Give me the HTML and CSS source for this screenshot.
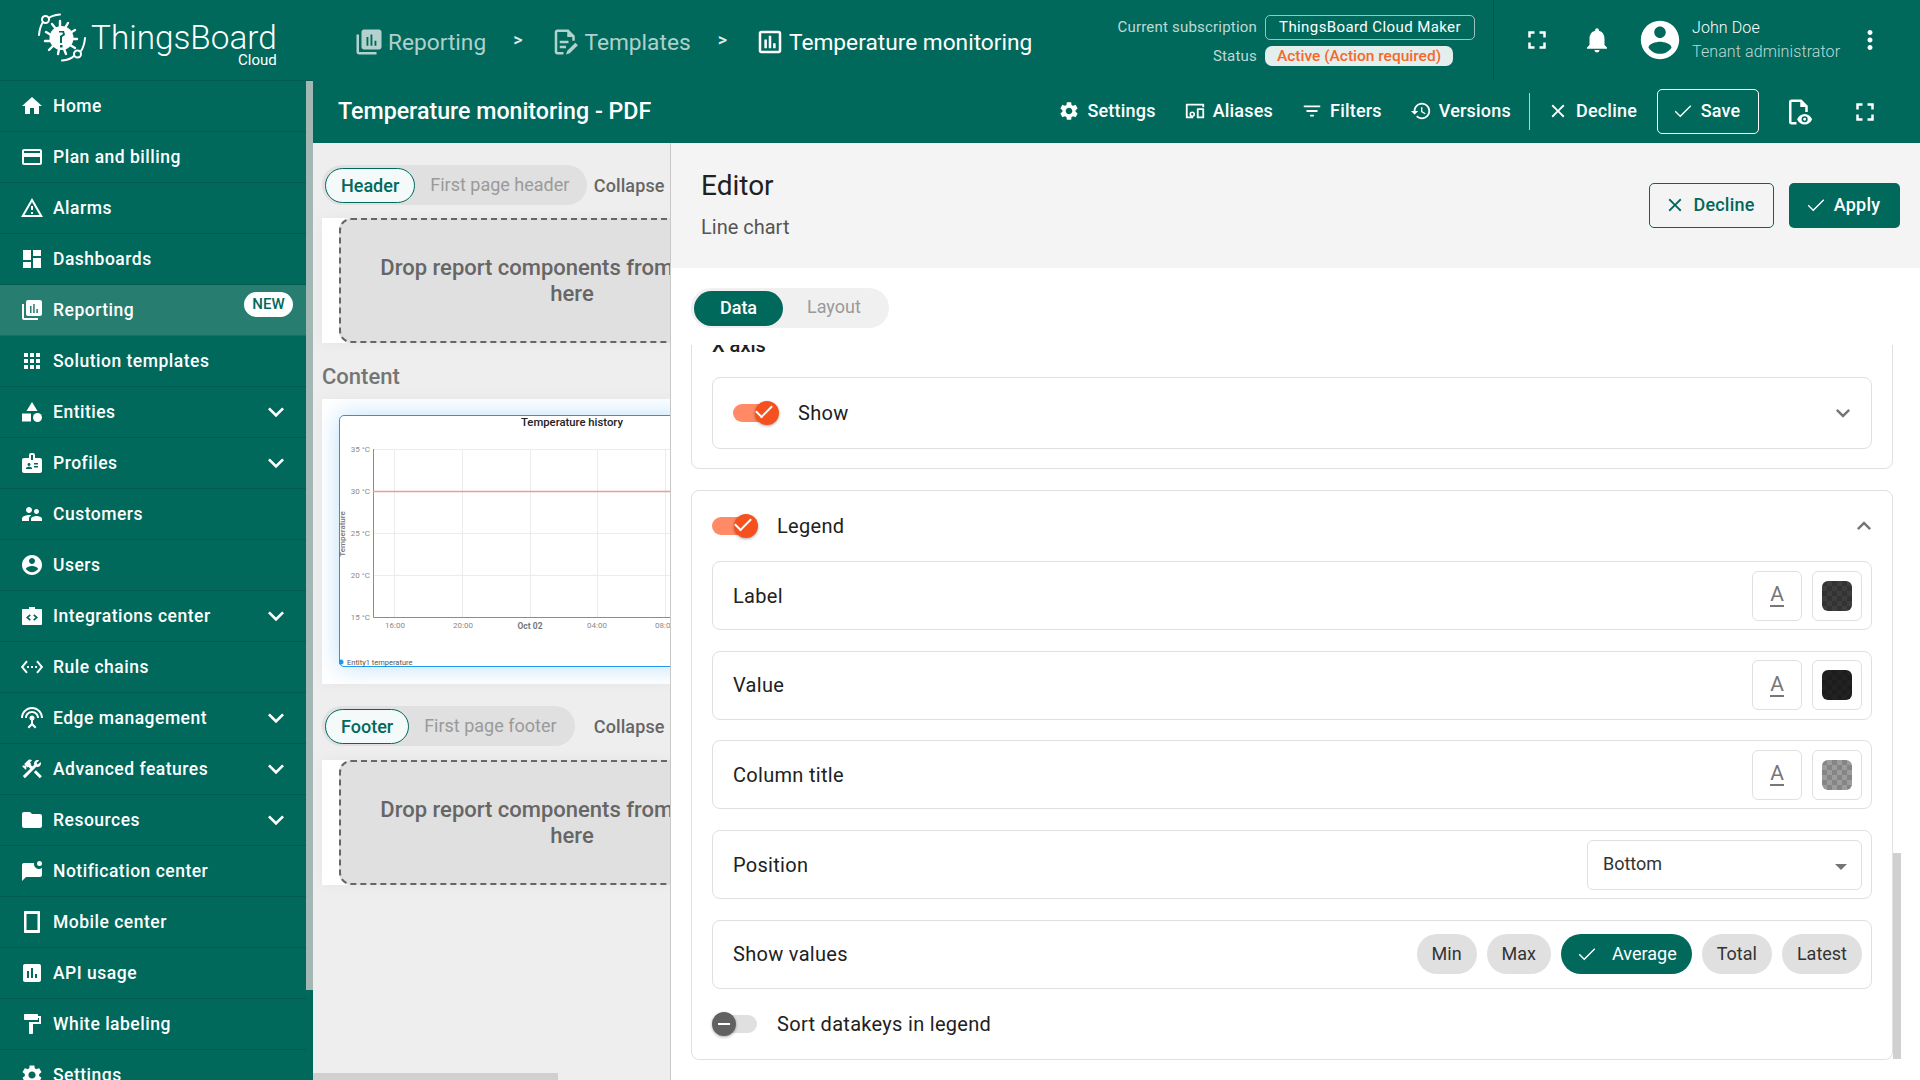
FILE: index.html
```html
<!DOCTYPE html>
<html>
  <head>
    <meta charset="utf-8" />
    <title>ThingsBoard - Temperature monitoring</title>
    <link rel="stylesheet" href="styles.css">
  </head>
  <body>
    <svg class="sprite" aria-hidden="true">
      <symbol id="i-home" viewBox="0 0 24 24"><path d="M10 20v-6h4v6h5v-8h3L12 3 2 12h3v8z"/></symbol>
      <symbol id="i-card" viewBox="0 0 24 24"><path d="M20 4H4c-1.11 0-1.99.89-1.99 2L2 18c0 1.11.89 2 2 2h16c1.11 0 2-.89 2-2V6c0-1.11-.89-2-2-2zm0 14H4v-6h16v6zm0-10H4V6h16v2z"/></symbol>
      <symbol id="i-warn" viewBox="0 0 24 24"><path d="M12 5.99L19.53 19H4.47L12 5.99M12 2L1 21h22L12 2zm1 14h-2v2h2v-2zm0-6h-2v4h2v-4z"/></symbol>
      <symbol id="i-dash" viewBox="0 0 24 24"><path d="M3 13h8V3H3v10zm0 8h8v-6H3v6zm10 0h8V11h-8v10zm0-18v6h8V3h-8z"/></symbol>
      <symbol id="i-report" viewBox="0 0 24 24"><path fill-rule="evenodd" d="M4 6H2v14c0 1.1.9 2 2 2h14v-2H4V6zm16-4H8c-1.1 0-2 .9-2 2v12c0 1.1.9 2 2 2h12c1.1 0 2-.9 2-2V4c0-1.1-.9-2-2-2zM10 8h1.5v7H10zM13.2 6h1.5v9h-1.5zM16.4 11h1.5v4h-1.5z"/></symbol>
      <symbol id="i-apps" viewBox="0 0 24 24"><path d="M4 8h4V4H4v4zm6 12h4v-4h-4v4zm-6 0h4v-4H4v4zm0-6h4v-4H4v4zm6 0h4v-4h-4v4zm6-10v4h4V4h-4zm-6 4h4V4h-4v4zm6 6h4v-4h-4v4zm0 6h4v-4h-4v4z"/></symbol>
      <symbol id="i-entities" viewBox="0 0 24 24"><path d="M12 2l-5.5 9h11z"/><circle cx="17.5" cy="17.5" r="4.5"/><path d="M2 13.5h9v8H2z"/></symbol>
      <symbol id="i-badge" viewBox="0 0 24 24"><path d="M20 7h-5V4c0-1.1-.9-2-2-2h-2c-1.1 0-2 .9-2 2v3H4c-1.1 0-2 .9-2 2v11c0 1.1.9 2 2 2h16c1.1 0 2-.9 2-2V9c0-1.1-.9-2-2-2zM9 12c.83 0 1.5.67 1.5 1.5S9.83 15 9 15s-1.5-.67-1.5-1.5S8.17 12 9 12zm3 6H6v-.75c0-1 2-1.5 3-1.5s3 .5 3 1.5V18zm1-9h-2V4h2v5zm5 7.5h-4V15h4v1.5zm0-3h-4V12h4v1.5z"/></symbol>
      <symbol id="i-people" viewBox="0 0 24 24"><path d="M16.5 12c1.38 0 2.49-1.12 2.49-2.5S17.88 7 16.5 7C15.12 7 14 8.12 14 9.5s1.12 2.5 2.5 2.5zM9 11c1.66 0 2.99-1.34 2.99-3S10.66 5 9 5C7.34 5 6 6.34 6 8s1.34 3 3 3zm7.5 3c-1.83 0-5.5.92-5.5 2.75V19h11v-2.25c0-1.83-3.67-2.75-5.5-2.75zM9 13c-2.33 0-7 1.17-7 3.5V19h7v-2.25c0-.85.33-2.34 2.37-3.47C10.5 13.1 9.66 13 9 13z"/></symbol>
      <symbol id="i-account" viewBox="0 0 24 24"><path d="M12 2C6.48 2 2 6.48 2 12s4.48 10 10 10 10-4.48 10-10S17.52 2 12 2zm0 3c1.66 0 3 1.34 3 3s-1.34 3-3 3-3-1.34-3-3 1.34-3 3-3zm0 14.2c-2.5 0-4.71-1.28-6-3.22.03-1.99 4-3.08 6-3.08 1.99 0 5.97 1.09 6 3.08-1.29 1.94-3.5 3.22-6 3.22z"/></symbol>
      <symbol id="i-integration" viewBox="0 0 24 24"><path fill-rule="evenodd" d="M9 3h6v2h6c.55 0 1 .45 1 1v14c0 .55-.45 1-1 1H3c-.55 0-1-.45-1-1V6c0-.55.45-1 1-1h6V3zm.7 7.3L6 13.5l3.7 3.2 1.1-1.2-2.3-2 2.3-2-1.100-1.200zm4.600 0l-1.100 1.200 2.300 2-2.300 2 1.100 1.200 3.700-3.200-3.700-3.200z"/></symbol>
      <symbol id="i-rule" viewBox="0 0 24 24"><path d="M7.770 6.760L6.230 5.480.82 12l5.410 6.520 1.540-1.280L3.420 12l4.350-5.240zM7 13h2v-2H7v2zm10-2h-2v2h2v-2zm-6 2h2v-2h-2v2zm6.770-7.520l-1.540 1.280L20.580 12l-4.350 5.240 1.540 1.280L23.180 12l-5.410-6.520z"/></symbol>
      <symbol id="i-edge" viewBox="0 0 24 24"><path d="M12 5c-3.870 0-7 3.130-7 7h2c0-2.760 2.240-5 5-5s5 2.240 5 5h2c0-3.870-3.130-7-7-7zm1 9.290c.88-.39 1.500-1.260 1.500-2.290 0-1.380-1.120-2.500-2.500-2.500S9.500 10.620 9.500 12c0 1.020.62 1.900 1.500 2.290v3.300L7.590 21 9 22.410l3-3 3 3L16.410 21 13 17.590v-3.300zM12 1C5.930 1 1 5.930 1 12h2c0-4.970 4.030-9 9-9s9 4.030 9 9h2c0-6.070-4.930-11-11-11z"/></symbol>
      <symbol id="i-tools" viewBox="0 0 24 24"><path d="M13.780 15.300l6 6 2.110-2.160-6-6zM17.500 10c1.930 0 3.500-1.570 3.500-3.500 0-.58-.16-1.120-.41-1.600l-2.700 2.700-1.490-1.490 2.700-2.700c-.48-.25-1.020-.41-1.600-.41C15.570 3 14 4.570 14 6.500c0 .41.08.8.21 1.160l-1.850 1.850-1.780-1.780.71-.71-1.410-1.410L12 3.490c-1.170-1.170-3.070-1.170-4.240 0L4.220 7.030l1.410 1.410H2.810l-.71.71 3.540 3.540.71-.71V9.150l1.410 1.410.71-.71 1.780 1.780-7.410 7.410 2.120 2.120L16.340 9.790c.36.13.75.21 1.160.21z"/></symbol>
      <symbol id="i-folder" viewBox="0 0 24 24"><path d="M10 4H4c-1.100 0-1.990.9-1.990 2L2 18c0 1.100.9 2 2 2h16c1.100 0 2-.9 2-2V8c0-1.100-.9-2-2-2h-8l-2-2z"/></symbol>
      <symbol id="i-notify" viewBox="0 0 24 24"><path d="M2 22V6c0-1.100.9-2 2-2h10.100c-.07.32-.1.66-.1 1 0 2.760 2.240 5 5 5 1 0 2-.3 3-.9V16c0 1.100-.9 2-2 2H6l-4 4z"/><circle cx="19.500" cy="4.500" r="2.500"/></symbol>
      <symbol id="i-mobile" viewBox="0 0 24 24"><path fill-rule="evenodd" d="M5 1h14c.55 0 1 .45 1 1v20c0 .55-.45 1-1 1H5c-.55 0-1-.45-1-1V2c0-.55.45-1 1-1zm1.500 3v16h11V4z"/></symbol>
      <symbol id="i-chart" viewBox="0 0 24 24"><path d="M19 3H5c-1.100 0-2 .9-2 2v14c0 1.100.9 2 2 2h14c1.100 0 2-.9 2-2V5c0-1.100-.9-2-2-2zM9 17H7v-7h2v7zm4 0h-2V7h2v10zm4 0h-2v-4h2v4z"/></symbol>
      <symbol id="i-chart-o" viewBox="0 0 24 24"><path d="M19 3H5c-1.100 0-2 .9-2 2v14c0 1.100.9 2 2 2h14c1.100 0 2-.9 2-2V5c0-1.100-.9-2-2-2zm0 16H5V5h14v14zM7.500 10h2v7h-2zM11 7h2v10h-2zM14.500 13h2v4h-2z"/></symbol>
      <symbol id="i-paint" viewBox="0 0 24 24"><path d="M18 4V3c0-.55-.45-1-1-1H5c-.55 0-1 .45-1 1v4c0 .55.45 1 1 1h12c.55 0 1-.45 1-1V6h1v4H9v11c0 .55.45 1 1 1h2c.55 0 1-.45 1-1v-9h8V4h-3z"/></symbol>
      <symbol id="i-gear" viewBox="0 0 24 24"><path d="M19.140 12.940c.04-.3.06-.61.06-.94 0-.32-.02-.64-.07-.94l2.030-1.580c.18-.14.23-.41.12-.61l-1.920-3.320c-.12-.22-.37-.29-.59-.22l-2.390.96c-.5-.38-1.030-.7-1.620-.94l-.36-2.540c-.04-.24-.24-.41-.48-.41h-3.840c-.24 0-.43.17-.47.41l-.36 2.540c-.59.24-1.130.57-1.620.94l-2.390-.96c-.22-.08-.47 0-.59.22L2.740 8.870c-.12.21-.08.47.12.61l2.030 1.580c-.05.3-.09.63-.09.94s.02.64.07.94l-2.030 1.580c-.18.14-.23.41-.12.61l1.920 3.320c.12.22.37.29.59.22l2.390-.96c.5.38 1.030.7 1.620.94l.36 2.540c.05.24.24.41.48.41h3.840c.24 0 .44-.17.47-.41l.36-2.540c.59-.24 1.130-.56 1.620-.94l2.390.96c.22.08.47 0 .59-.22l1.920-3.320c.12-.22.07-.47-.12-.61l-2.010-1.580zM12 15.600c-1.980 0-3.600-1.620-3.600-3.600s1.620-3.600 3.600-3.600 3.600 1.620 3.600 3.600-1.620 3.600-3.600 3.600z"/></symbol>
      <symbol id="i-more" viewBox="0 0 24 24"><path d="M16.590 8.590L12 13.170 7.410 8.590 6 10l6 6 6-6z"/></symbol>
      <symbol id="i-full" viewBox="0 0 24 24"><path d="M7 14H5v5h5v-2H7v-3zm-2-4h2V7h3V5H5v5zm12 7h-3v2h5v-5h-2v3zM14 5v2h3v3h2V5h-5z"/></symbol>
      <symbol id="i-bell" viewBox="0 0 24 24"><path d="M12 22c1.100 0 2-.9 2-2h-4c0 1.100.89 2 2 2zm6-6v-5c0-3.070-1.640-5.640-4.500-6.320V4c0-.83-.67-1.500-1.500-1.500s-1.500.67-1.500 1.500v.68C7.630 5.360 6 7.920 6 11v5l-2 2v1h16v-1l-2-2z"/></symbol>
      <symbol id="i-dots" viewBox="0 0 24 24"><path d="M12 8c1.100 0 2-.9 2-2s-.9-2-2-2-2 .9-2 2 .9 2 2 2zm0 2c-1.100 0-2 .9-2 2s.9 2 2 2 2-.9 2-2-.9-2-2-2zm0 6c-1.100 0-2 .9-2 2s.9 2 2 2 2-.9 2-2-.9-2-2-2z"/></symbol>
      <symbol id="i-filter" viewBox="0 0 24 24"><path d="M10 18h4v-2h-4v2zM3 6v2h18V6H3zm3 7h12v-2H6v2z"/></symbol>
      <symbol id="i-history" viewBox="0 0 24 24"><path d="M13 3c-4.970 0-9 4.030-9 9H1l3.890 3.890.07.14L9 12H6c0-3.870 3.130-7 7-7s7 3.130 7 7-3.130 7-7 7c-1.930 0-3.680-.79-4.940-2.060l-1.420 1.420C8.270 19.990 10.510 21 13 21c4.970 0 9-4.030 9-9s-4.030-9-9-9zm-1 5v5l4.280 2.540.72-1.210-3.500-2.080V8H12z"/></symbol>
      <symbol id="i-close" viewBox="0 0 24 24"><path d="M19 6.410L17.590 5 12 10.590 6.410 5 5 6.410 10.590 12 5 17.590 6.410 19 12 13.410 17.590 19 19 17.590 13.410 12z"/></symbol>
      <symbol id="i-check" viewBox="0 0 24 24"><path d="M9 16.700L4 11.700l-1 1L9 18.700 21 6.700l-1-1z"/></symbol>
      <symbol id="i-alias" viewBox="0 0 24 24"><path d="M20 4H3c-.55 0-1 .45-1 1v14c0 .55.45 1 1 1h7v-2H4V6h16v2h2V5c0-.55-.45-1-1-1zM15 9h6c.55 0 1 .45 1 1v9c0 .55-.45 1-1 1h-6c-.55 0-1-.45-1-1v-9c0-.55.45-1 1-1zm1 2v7h4v-7zM9 12.500a3 3 0 1 0 0 6 3 3 0 0 0 0-6zm0 1.700a1.300 1.300 0 1 1 0 2.600 1.300 1.300 0 0 1 0-2.600z"/></symbol>
      <symbol id="i-template" viewBox="0 0 24 24"><path d="M5 2h9l5 5v4h-2V8h-4V4H5v16h5v2H5c-1.100 0-2-.9-2-2V4c0-1.100.9-2 2-2zM7 11h7v2H7zM7 15h5v2H7zM19.500 12.500l2 2-6.500 6.500-3 1 1-3z"/></symbol>
      <symbol id="i-preview" viewBox="0 0 24 24"><path d="M6 2h8l5 5v5h-2V8h-4V4H6v16h4v2H6c-1.100 0-2-.9-2-2V4c0-1.100.9-2 2-2z"/><path fill-rule="evenodd" d="M16.500 13.500c2.700 0 5 1.700 6 4.250-1 2.550-3.300 4.250-6 4.250s-5-1.700-6-4.250c1-2.550 3.300-4.250 6-4.250zm0 1.800a2.450 2.450 0 1 0 0 4.900 2.450 2.450 0 0 0 0-4.900zm0 1.300a1.150 1.150 0 1 1 0 2.300 1.150 1.150 0 0 1 0-2.300z"/></symbol>
    </svg>

    <header class="topbar">
      <div class="logo">
        <svg class="logo-mark" viewBox="0 0 52 52">
          <g fill="none" stroke="#fff" stroke-width="2" stroke-linecap="round">
            <path d="M3 22 C3.500 16 5 12 7 9"/>
            <circle cx="9.500" cy="6.500" r="3.500"/>
            <path d="M13 5 C15 3 19 2 24 1.500"/>
            <path d="M49 25 C48.500 31 47 35 45 38"/>
            <circle cx="41.500" cy="41" r="3.500"/>
            <path d="M38 43 C36 45 31 47 26 47.500"/>
            <g stroke-width="2.400">
              <path d="M16 11l4 5M24 8v6M32 10l-3 5M39 17l-5 3M41 26h-6M39 35l-5-3M30 41l-2-5M22 41l1-5M13 37l4-4M9 28h6M10 19l5 3"/>
            </g>
          </g>
          <circle cx="25.500" cy="25" r="12" fill="#fff"/>
          <path d="M23 18h5l1 4-3 2v6h-2v-7l3-2-.5-1.500H23zM24 32h2.500v2.500H24z" fill="#00695c"/>
        </svg>
        <div class="logo-text">
          <span class="logo-name">ThingsBoard</span>
          <span class="logo-sub">Cloud</span>
        </div>
      </div>
      <nav class="crumbs">
        <svg class="crumb-icon"><use href="#i-report"/></svg>
        <span class="crumb">Reporting</span>
        <span class="crumb-sep">&gt;</span>
        <svg class="crumb-icon"><use href="#i-template"/></svg>
        <span class="crumb">Templates</span>
        <span class="crumb-sep">&gt;</span>
        <svg class="crumb-icon current"><use href="#i-chart-o"/></svg>
        <span class="crumb current">Temperature monitoring</span>
      </nav>
      <div class="subscription">
        <span class="sub-label">Current subscription</span>
        <span class="sub-plan">ThingsBoard Cloud Maker</span>
        <span class="sub-label">Status</span>
        <span class="sub-status">Active (Action required)</span>
      </div>
      <div class="top-tools">
        <button class="icon-btn"><svg><use href="#i-full"/></svg></button>
        <button class="icon-btn"><svg><use href="#i-bell"/></svg></button>
        <svg class="avatar"><use href="#i-account"/></svg>
        <div class="user">
          <span class="user-name">John Doe</span>
          <span class="user-role">Tenant administrator</span>
        </div>
        <button class="icon-btn"><svg><use href="#i-dots"/></svg></button>
      </div>
    </header>

    <div class="shell">
      <aside class="sidenav">
        <a class="nav-item"><svg><use href="#i-home"/></svg>Home</a>
        <a class="nav-item"><svg><use href="#i-card"/></svg>Plan and billing</a>
        <a class="nav-item"><svg><use href="#i-warn"/></svg>Alarms</a>
        <a class="nav-item"><svg><use href="#i-dash"/></svg>Dashboards</a>
        <a class="nav-item active"><svg><use href="#i-report"/></svg>Reporting<span class="nav-new">NEW</span></a>
        <a class="nav-item"><svg><use href="#i-apps"/></svg>Solution templates</a>
        <a class="nav-item"><svg><use href="#i-entities"/></svg>Entities<svg class="nav-arrow"><use href="#i-more"/></svg></a>
        <a class="nav-item"><svg><use href="#i-badge"/></svg>Profiles<svg class="nav-arrow"><use href="#i-more"/></svg></a>
        <a class="nav-item"><svg><use href="#i-people"/></svg>Customers</a>
        <a class="nav-item"><svg><use href="#i-account"/></svg>Users</a>
        <a class="nav-item"><svg><use href="#i-integration"/></svg>Integrations center<svg class="nav-arrow"><use href="#i-more"/></svg></a>
        <a class="nav-item"><svg><use href="#i-rule"/></svg>Rule chains</a>
        <a class="nav-item"><svg><use href="#i-edge"/></svg>Edge management<svg class="nav-arrow"><use href="#i-more"/></svg></a>
        <a class="nav-item"><svg><use href="#i-tools"/></svg>Advanced features<svg class="nav-arrow"><use href="#i-more"/></svg></a>
        <a class="nav-item"><svg><use href="#i-folder"/></svg>Resources<svg class="nav-arrow"><use href="#i-more"/></svg></a>
        <a class="nav-item"><svg><use href="#i-notify"/></svg>Notification center</a>
        <a class="nav-item"><svg><use href="#i-mobile"/></svg>Mobile center</a>
        <a class="nav-item"><svg><use href="#i-chart"/></svg>API usage</a>
        <a class="nav-item"><svg><use href="#i-paint"/></svg>White labeling</a>
        <a class="nav-item"><svg><use href="#i-gear"/></svg>Settings</a>
        <div class="nav-scroll"></div>
      </aside>

      <main class="main">
        <div class="toolbar">
          <h1 class="page-title">Temperature monitoring - PDF</h1>
          <div class="actions">
            <a class="action"><svg><use href="#i-gear"/></svg>Settings</a>
            <a class="action"><svg><use href="#i-alias"/></svg>Aliases</a>
            <a class="action"><svg><use href="#i-filter"/></svg>Filters</a>
            <a class="action"><svg><use href="#i-history"/></svg>Versions</a>
            <span class="action-sep"></span>
            <a class="action"><svg><use href="#i-close"/></svg>Decline</a>
            <a class="action save"><svg><use href="#i-check"/></svg>Save</a>
            <svg class="tool-icon preview"><use href="#i-preview"/></svg>
            <svg class="tool-icon"><use href="#i-full"/></svg>
          </div>
        </div>

        <div class="workspace">
          <section class="report">
            <div class="section-head">
              <div class="seg">
                <span class="seg-item on">Header</span>
                <span class="seg-item">First page header</span>
              </div>
              <span class="collapse">Collapse</span>
            </div>
            <div class="band">
              <div class="drop">Drop report components from the pane<br>here</div>
            </div>

            <h2 class="content-title">Content</h2>
            <div class="band chart-band">
              <div class="chart-box">
                <svg class="chart" viewBox="0 0 464 252" width="464" height="252">
                  <text x="233" y="11" class="c-title" text-anchor="middle">Temperature history</text>
                  <g stroke="#ececec">
                    <path d="M34 34.500H464M34 118.500H464M34 160.500H464"/>
                    <path d="M55.500 34V202M123.500 34V202M191.500 34V202M258.500 34V202M326.500 34V202"/>
                  </g>
                  <path d="M34.500 34V202.500H464" fill="none" stroke="#8c8c8c"/>
                  <path d="M34 76.500H464" stroke="#ef9a9a" stroke-width="1.500"/>
                  <g class="c-tick" text-anchor="end">
                    <text x="31" y="37">35 °C</text>
                    <text x="31" y="79">30 °C</text>
                    <text x="31" y="121">25 °C</text>
                    <text x="31" y="163">20 °C</text>
                    <text x="31" y="205">15 °C</text>
                  </g>
                  <g class="c-tick" text-anchor="middle">
                    <text x="56" y="213">16:00</text>
                    <text x="124" y="213">20:00</text>
                    <text x="258" y="213">04:00</text>
                    <text x="326" y="213">08:00</text>
                    <text x="191" y="214" class="c-bold">Oct 02</text>
                  </g>
                  <text class="c-axis" transform="translate(6 119) rotate(-90)" text-anchor="middle">Temperature</text>
                  <circle cx="2" cy="247" r="2.500" fill="#2196f3"/>
                  <text x="8" y="250" class="c-legend">Entity1 temperature</text>
                </svg>
              </div>
            </div>

            <div class="section-head footer-head">
              <div class="seg">
                <span class="seg-item on">Footer</span>
                <span class="seg-item">First page footer</span>
              </div>
              <span class="collapse">Collapse</span>
            </div>
            <div class="band footer-band">
              <div class="drop">Drop report components from the pane<br>here</div>
            </div>
            <div class="h-scroll"></div>
          </section>

          <section class="editor">
            <div class="editor-head">
              <div>
                <h2 class="editor-title">Editor</h2>
                <div class="editor-sub">Line chart</div>
              </div>
              <div class="editor-btns">
                <a class="btn btn-outline"><svg><use href="#i-close"/></svg>Decline</a>
                <a class="btn btn-solid"><svg><use href="#i-check"/></svg>Apply</a>
              </div>
            </div>
            <div class="editor-tabs">
              <div class="seg seg-light">
                <span class="seg-item fill">Data</span>
                <span class="seg-item">Layout</span>
              </div>
            </div>
            <div class="editor-scroll">
              <div class="panel axis-panel">
                <div class="panel-title">X axis</div>
                <div class="row show-row">
                  <span class="toggle on"></span>
                  <span class="row-label">Show</span>
                  <svg class="row-chevron"><use href="#i-more"/></svg>
                </div>
              </div>
              <div class="panel legend-panel">
                <div class="panel-head">
                  <span class="toggle on"></span>
                  <span class="row-label">Legend</span>
                  <svg class="row-chevron up"><use href="#i-more"/></svg>
                </div>
                <div class="rows">
                  <div class="row">
                    <span class="row-label">Label</span>
                    <span class="font-btn"><span class="font-a">A</span></span>
                    <span class="color-btn"><span class="swatch sw-label"></span></span>
                  </div>
                  <div class="row">
                    <span class="row-label">Value</span>
                    <span class="font-btn"><span class="font-a">A</span></span>
                    <span class="color-btn"><span class="swatch sw-value"></span></span>
                  </div>
                  <div class="row">
                    <span class="row-label">Column title</span>
                    <span class="font-btn"><span class="font-a">A</span></span>
                    <span class="color-btn"><span class="swatch sw-title"></span></span>
                  </div>
                  <div class="row">
                    <span class="row-label">Position</span>
                    <span class="select">Bottom<i class="select-arrow"></i></span>
                  </div>
                  <div class="row">
                    <span class="row-label">Show values</span>
                    <div class="chips">
                      <span class="chip">Min</span>
                      <span class="chip">Max</span>
                      <span class="chip selected"><svg><use href="#i-check"/></svg>Average</span>
                      <span class="chip">Total</span>
                      <span class="chip">Latest</span>
                    </div>
                  </div>
                </div>
                <div class="panel-foot">
                  <span class="toggle off"></span>
                  <span class="row-label">Sort datakeys in legend</span>
                </div>
              </div>
              <div class="v-scroll"></div>
            </div>
          </section>
        </div>
      </main>
    </div>
  </body>
</html>
```

FILE: styles.css
```css
* {
  box-sizing: border-box;
}
html,
body {
  margin: 0;
  height: 1080px;
  overflow: hidden;
}
body {
  font-family: "Roboto", sans-serif;
  color: #212121;
  background: #00695c;
}
h1,
h2 {
  margin: 0;
}
svg {
  fill: currentColor;
  flex: none;
}
.sprite {
  display: none;
}

/* top bar */
.topbar {
  display: flex;
  align-items: center;
  height: 80px;
  color: #fff;
  background: #00695c;
}
.logo {
  display: flex;
  flex: none;
  width: 313px;
  padding: 13px 0 0 36px;
  height: 80px;
}
.logo-mark {
  width: 52px;
  height: 52px;
}
.logo-text {
  display: flex;
  flex-direction: column;
  align-items: flex-end;
  margin-left: 3px;
}
.logo-name {
  margin-top: 9px;
  font-size: 33.3px;
  font-weight: 300;
  line-height: 32px;
}
.logo-sub {
  font-size: 15px;
  line-height: 12px;
}
.crumbs {
  display: flex;
  flex: none;
  align-items: center;
  padding: 4px 0 0 41px;
  font-size: 22.7px;
  white-space: nowrap;
}
.crumb-icon {
  width: 30px;
  height: 30px;
  color: rgba(255, 255, 255, 0.7);
  margin-right: 4px;
}
.crumb {
  color: rgba(255, 255, 255, 0.7);
}
.crumb-icon.current,
.crumb.current {
  color: #fff;
}
.crumb-sep {
  font-size: 18px;
  font-weight: 500;
  margin: -6px 28px 0 27px;
  color: rgba(255, 255, 255, 0.9);
}
.subscription {
  display: grid;
  grid-template-columns: 1fr 210px;
  column-gap: 8px;
  row-gap: 6px;
  width: 370px;
  margin-left: auto;
  align-items: center;
  justify-items: end;
  font-size: 15px;
}
.sub-label {
  color: rgba(255, 255, 255, 0.75);
  letter-spacing: 0.2px;
}
.sub-plan {
  justify-self: stretch;
  height: 25px;
  line-height: 23px;
  border: 1px solid rgba(255, 255, 255, 0.6);
  border-radius: 5px;
  text-align: center;
  letter-spacing: 0.4px;
  color: #fff;
}
.sub-status {
  justify-self: start;
  width: 188px;
  height: 20px;
  line-height: 20px;
  border-radius: 7px;
  text-align: center;
  background: #e4eeec;
  color: #f4692b;
  font-size: 15.5px;
  font-weight: 500;
}
.top-tools {
  display: flex;
  flex: none;
  align-items: center;
  height: 80px;
  margin-left: 18px;
  padding: 0 30px 0 23px;
  border-left: 1px solid rgba(0, 0, 0, 0.15);
}
.icon-btn {
  display: flex;
  align-items: center;
  justify-content: center;
  width: 40px;
  height: 40px;
  margin-right: 20px;
  padding: 0;
  border: 0;
  background: none;
  color: #fff;
}
.icon-btn svg {
  width: 30px;
  height: 30px;
}
.avatar {
  width: 46px;
  height: 46px;
}
.user {
  display: flex;
  flex-direction: column;
  gap: 6px;
  width: 158px;
  margin-left: 9px;
  font-size: 16px;
  font-weight: 300;
  line-height: 18px;
  letter-spacing: 0.1px;
}
.user-role {
  color: rgba(255, 255, 255, 0.75);
}
.top-tools .icon-btn:last-child {
  margin-right: 0;
}

/* shell */
.shell {
  display: flex;
  height: 1000px;
}

/* side nav */
.sidenav {
  position: relative;
  width: 313px;
  flex: none;
  overflow: hidden;
  color: #fff;
  background: #00695c;
  border-top: 1px solid rgba(0, 0, 0, 0.12);
}
.nav-item {
  display: flex;
  align-items: center;
  width: 306px;
  height: 51px;
  padding-left: 20px;
  font-size: 17.5px;
  font-weight: 500;
  letter-spacing: 0.5px;
  border-bottom: 1px solid rgba(0, 0, 0, 0.12);
}
.nav-item > svg:first-child {
  width: 24px;
  height: 24px;
  margin-right: 9px;
}
.nav-item.active {
  background: #267d70;
}
.nav-new {
  margin: -11px 13px 0 auto;
  width: 49px;
  height: 25px;
  line-height: 25px;
  border-radius: 13px;
  text-align: center;
  font-size: 15px;
  letter-spacing: 0;
  color: #00695c;
  background: #fff;
}
.nav-arrow {
  width: 32px;
  height: 32px;
  margin-left: auto;
  margin-right: 14px;
}
.nav-scroll {
  position: absolute;
  top: 0;
  right: 0;
  width: 7px;
  height: 909px;
  background: #a3b8b4;
}

/* main */
.main {
  flex: 1;
  display: flex;
  flex-direction: column;
  min-width: 0;
}
.toolbar {
  display: flex;
  align-items: center;
  height: 63px;
  padding-left: 25px;
  color: #fff;
  background: #00695c;
}
.page-title {
  padding-bottom: 1px;
  font-size: 23.2px;
  font-weight: 500;
}
.actions {
  display: flex;
  align-items: center;
  margin-left: auto;
  padding-right: 40px;
}
.action {
  display: flex;
  align-items: center;
  gap: 7px;
  margin-left: 28px;
  padding-bottom: 2px;
  font-size: 18px;
  font-weight: 500;
  letter-spacing: 0.2px;
}
.action svg {
  width: 22px;
  height: 22px;
}
.action-sep {
  width: 1px;
  height: 37px;
  margin-left: 18px;
  margin-right: -11px;
  background: rgba(255, 255, 255, 0.7);
}
.save {
  justify-content: center;
  width: 102px;
  height: 45px;
  margin-left: 20px;
  padding-right: 4px;
  border: 1px solid #fff;
  border-radius: 5px;
}
.tool-icon {
  width: 30px;
  height: 30px;
  margin-left: 36px;
}
.tool-icon.preview {
  margin-left: 25px;
}
.workspace {
  flex: 1;
  display: flex;
  min-height: 0;
}

/* report preview */
.report {
  position: relative;
  width: 358px;
  flex: none;
  overflow: hidden;
  padding: 22px 0 0 9px;
  background: #eeeeee;
  border-right: 1px solid #c8c8c8;
}
.section-head {
  display: flex;
  align-items: center;
  justify-content: space-between;
  width: 342.5px;
  height: 40px;
}
.footer-head {
  margin-top: 22px;
}
.seg {
  display: flex;
  align-items: center;
  height: 40px;
  padding: 0 3px;
  border-radius: 20px;
  background: #e0e0e0;
  font-size: 18px;
}
.seg-item {
  display: flex;
  align-items: center;
  height: 35px;
  padding: 0 15px 2px;
  border-radius: 18px;
  color: #9a9a9a;
}
.seg-item.on {
  padding-bottom: 0;
  color: #00695c;
  font-weight: 500;
  background: #f4f9f9;
  border: 1px solid #00695c;
}
.seg-item.fill {
  justify-content: center;
  width: 89px;
  padding-bottom: 1px;
  color: #fff;
  font-weight: 500;
  background: #00695c;
}
.seg-light {
  background: #f0f0f0;
  width: 198px;
}
.seg-light .seg-item:last-child {
  padding: 0 0 3px 24px;
}
.collapse {
  font-size: 18px;
  font-weight: 500;
  letter-spacing: 0.1px;
  color: #666;
}
.band {
  width: 348px;
  height: 125px;
  margin-top: 13px;
  padding-left: 17px;
  background: #fff;
  overflow: hidden;
  box-shadow: 0 0 14px rgba(0, 0, 0, 0.04);
}
.footer-band {
  margin-top: 14px;
}
.drop {
  display: flex;
  align-items: center;
  justify-content: center;
  width: 464px;
  height: 100%;
  padding-left: 2px;
  text-align: center;
  font-size: 22px;
  font-weight: 500;
  line-height: 26px;
  color: #666;
  background: #e0e0e0;
  border: 2px dashed #666;
  border-radius: 12px;
}
.content-title {
  height: 26px;
  margin-top: 21px;
  font-size: 22px;
  font-weight: 500;
  line-height: 26px;
  color: #757575;
}
.chart-band {
  height: 285px;
  margin-top: 9px;
  padding-top: 16px;
}
.chart-box {
  width: 464px;
  height: 252px;
  background: #fff;
  border: 1.5px solid #2196f3;
  border-radius: 5px;
  box-shadow: 0 0 24px rgba(33, 150, 243, 0.3);
}
.chart {
  display: block;
  margin: -1.5px;
  fill: #333;
}
.c-title {
  font-size: 11.3px;
  font-weight: 500;
  fill: #212121;
}
.c-tick {
  font-size: 8px;
  fill: #8a8a8a;
}
.c-bold {
  font-size: 8.5px;
  font-weight: 700;
  fill: #777;
}
.c-axis {
  font-size: 8px;
  font-weight: 500;
  fill: #777;
}
.c-legend {
  font-size: 7.5px;
  fill: #555;
}
.h-scroll {
  position: absolute;
  left: 0;
  bottom: 0;
  width: 245px;
  height: 7px;
  background: #d0d0d0;
}

/* editor */
.editor {
  flex: 1;
  display: flex;
  flex-direction: column;
  min-width: 0;
  background: #fff;
}
.editor-head {
  display: flex;
  justify-content: space-between;
  height: 125px;
  padding: 25px 20px 0 30px;
  background: #f4f4f4;
}
.editor-title {
  font-size: 28px;
  font-weight: 400;
  line-height: 36px;
}
.editor-sub {
  margin-top: 11px;
  font-size: 20px;
  line-height: 24px;
  color: #555;
}
.editor-btns {
  display: flex;
  gap: 15px;
  padding-top: 15px;
}
.btn {
  display: flex;
  align-items: center;
  justify-content: center;
  gap: 7px;
  height: 45px;
  padding: 0 4px 2px 0;
  border-radius: 5px;
  font-size: 18px;
  font-weight: 500;
  letter-spacing: 0.2px;
}
.btn svg {
  width: 22px;
  height: 22px;
}
.btn-outline {
  width: 125px;
  color: #00695c;
  border: 1px solid #00695c;
}
.btn-solid {
  width: 111px;
  color: #fff;
  background: #00695c;
}
.editor-tabs {
  height: 77px;
  padding: 20px 0 0 20px;
}
.editor-scroll {
  position: relative;
  flex: 1;
  overflow: hidden;
  padding: 0 27px 0 20px;
}
.panel {
  border: 1px solid #e0e0e0;
  border-radius: 8px;
  padding: 0 20px;
}
.axis-panel {
  margin-top: -40px;
  height: 164px;
}
.panel-title {
  padding-top: 27px;
  margin-bottom: 20px;
  font-size: 20px;
  font-weight: 500;
  line-height: 24px;
}
.legend-panel {
  margin-top: 21px;
  height: 570px;
}
.panel-head,
.panel-foot {
  display: flex;
  align-items: center;
  height: 70px;
}
.rows {
  display: flex;
  flex-direction: column;
  gap: 20.7px;
}
.row {
  display: flex;
  align-items: center;
  height: 69px;
  padding: 0 9px 0 20px;
  border: 1px solid #e0e0e0;
  border-radius: 8px;
}
.show-row {
  height: 72px;
  padding-right: 14px;
}
.row-label {
  font-size: 20px;
  letter-spacing: 0.3px;
  color: #212121;
}
.toggle {
  position: relative;
  width: 45px;
  height: 18px;
  margin-right: 20px;
  border-radius: 9px;
  background: #ff8a65;
}
.toggle::after {
  content: "";
  position: absolute;
  top: -3px;
  right: -1px;
  width: 24px;
  height: 24px;
  border-radius: 50%;
  background: #f4511e;
  box-shadow: 0 1px 3px rgba(0, 0, 0, 0.35);
}
.toggle.on::before {
  content: "";
  position: absolute;
  z-index: 1;
  top: 1px;
  right: 6px;
  width: 14px;
  height: 7px;
  border-left: 2.5px solid #fff;
  border-bottom: 2.5px solid #fff;
  transform: rotate(-45deg);
}
.toggle.off {
  background: #e0e0e0;
}
.toggle.off::after {
  right: auto;
  left: 0;
  background: #616161;
}
.toggle.off::before {
  content: "";
  position: absolute;
  z-index: 1;
  top: 8px;
  left: 6px;
  width: 12px;
  height: 2px;
  background: #fff;
}
.row-chevron {
  width: 28px;
  height: 28px;
  margin-left: auto;
  color: #757575;
}
.row-chevron.up {
  margin-right: -6px;
  transform: rotate(180deg);
}
.font-btn,
.color-btn {
  display: flex;
  align-items: center;
  justify-content: center;
  width: 50px;
  height: 50px;
  border: 1px solid #e0e0e0;
  border-radius: 6px;
}
.font-btn {
  margin-left: auto;
  margin-right: 10px;
}
.font-a {
  font-size: 21px;
  line-height: 21px;
  color: #777;
  border-bottom: 2px solid #777;
}
.swatch {
  width: 30px;
  height: 30px;
  border-radius: 6px;
  background-size: 10px 10px;
}
.sw-label {
  background-image: repeating-conic-gradient(#3e3e3e 0 25%, #333 0 50%);
}
.sw-value {
  background-image: repeating-conic-gradient(#222 0 25%, #1d1d1d 0 50%);
}
.sw-title {
  background-image: repeating-conic-gradient(#9c9c9c 0 25%, #858585 0 50%);
}
.select {
  position: relative;
  display: flex;
  align-items: center;
  width: 275px;
  height: 50px;
  margin-left: auto;
  padding: 0 0 2px 15px;
  border: 1px solid #e0e0e0;
  border-radius: 6px;
  font-size: 18px;
  color: #333;
}
.select-arrow {
  position: absolute;
  right: 14px;
  top: 23px;
  border-left: 6px solid transparent;
  border-right: 6px solid transparent;
  border-top: 6px solid #757575;
}
.chips {
  display: flex;
  gap: 10px;
  margin-left: auto;
}
.chip {
  display: flex;
  align-items: center;
  height: 40px;
  padding: 0 15px 1px;
  border-radius: 20px;
  font-size: 18px;
  color: #333;
  background: #e0e0e0;
}
.chip.selected {
  gap: 14px;
  color: #fff;
  background: #00695c;
}
.chip svg {
  width: 22px;
  height: 22px;
}
.v-scroll {
  position: absolute;
  right: 19px;
  top: 508px;
  width: 8px;
  height: 206px;
  background: #d0d0d0;
}
```
